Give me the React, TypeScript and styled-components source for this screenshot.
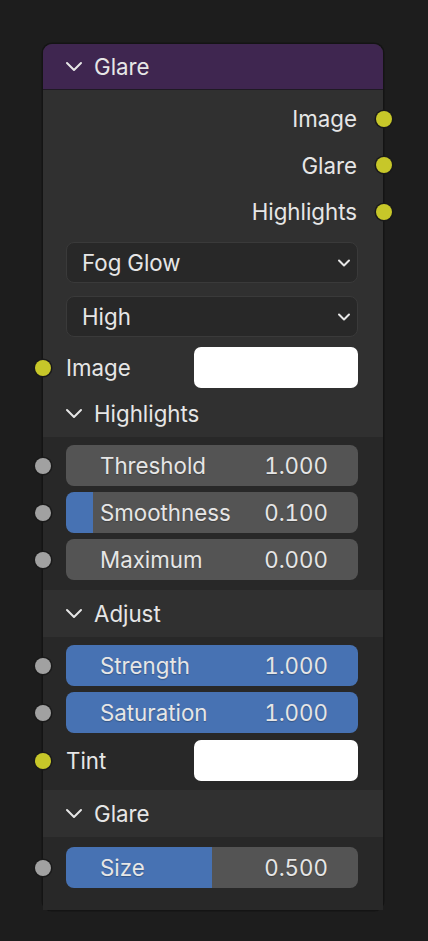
import React, { FC } from 'react';
import styled, { createGlobalStyle } from 'styled-components';

const GlobalStyle = createGlobalStyle`
    html, body {
        margin: 0;
        padding: 0;
        background: #1d1d1d;
    }
    body {
        font-family: Inter, 'Noto Sans', 'DejaVu Sans', sans-serif;
        font-size: 22.3px;
        font-variant-numeric: tabular-nums;
        color: #e6e6e6;
        -webkit-font-smoothing: antialiased;
    }
`;

const Canvas = styled.div`
    width: 428px;
    height: 941px;
    padding: 44px 0 0 43px;
    box-sizing: border-box;
`;

const Node = styled.div`
    position: relative;
    width: 340px;
    border-radius: 9px;
    background: #303030;
    box-shadow: 0 0 0 1.5px #141414;
`;

const Header = styled.div`
    height: 45px;
    display: flex;
    align-items: center;
    gap: 11px;
    padding-left: 22px;
    background: #3f2650;
    border-radius: 9px 9px 0 0;
    border-bottom: 1px solid #1f1a24;
`;

const Chevron = styled.svg`
    width: 18px;
    height: 11px;
    fill: none;
    stroke: #e6e6e6;
    stroke-width: 2px;
    stroke-linecap: round;
    stroke-linejoin: round;
    flex: none;
`;

const Section = styled.div<{ $dark?: boolean; $pt?: number; $pb?: number }>`
    display: flex;
    flex-direction: column;
    padding: ${(p) => p.$pt ?? 0}px 25px ${(p) => p.$pb ?? 0}px 23px;
    background: ${(p) => (p.$dark ? '#282828' : '#303030')};
`;

const Row = styled.div<{ $h?: number; $mt?: number }>`
    position: relative;
    height: ${(p) => p.$h ?? 41}px;
    margin-top: ${(p) => p.$mt ?? 0}px;
    display: flex;
    align-items: center;
`;

const OutputRow = styled(Row)`
    justify-content: flex-end;
    padding-right: 1px;
`;

const Socket = styled.span<{ $color: string; $side: 'left' | 'right' }>`
    position: absolute;
    top: 50%;
    ${(p) => (p.$side === 'left' ? 'left: -31px;' : 'right: -34px;')}
    width: 16px;
    height: 16px;
    margin-top: -8px;
    border-radius: 50%;
    background: ${(p) => p.$color};
    box-shadow: 0 0 0 1.5px #1a1a1a;
`;

const Dropdown = styled.div<{ $mt: number }>`
    height: 41px;
    margin-top: ${(p) => p.$mt}px;
    box-sizing: border-box;
    display: flex;
    align-items: center;
    justify-content: space-between;
    padding: 0 5px 0 15px;
    background: #282828;
    border: 1px solid #3a3a3a;
    border-radius: 8px;
`;

const DropChevron = styled(Chevron)`
    width: 16px;
    height: 10px;
`;

const InputLabel = styled.span`
    flex: 1;
`;

const Swatch = styled.div`
    width: 164px;
    height: 41px;
    border-radius: 7px;
    background: #ffffff;
`;

const PanelHeader = styled.div`
    height: 47px;
    display: flex;
    align-items: center;
    gap: 11px;
    padding-left: 22px;
    background: #303030;
`;

const Field = styled.div<{ $fill: number; $mt?: number }>`
    position: relative;
    height: 41px;
    margin-top: ${(p) => p.$mt ?? 0}px;
    border-radius: 8px;
    display: flex;
    align-items: center;
    justify-content: space-between;
    padding: 0 30px 0 34px;
    background: linear-gradient(
        to right,
        #4772b3 0%,
        #4772b3 ${(p) => p.$fill}%,
        #545454 ${(p) => p.$fill}%,
        #545454 100%
    );
`;

const FieldText = styled.span`
    position: relative;
    text-shadow: 0 1px 1px rgba(0, 0, 0, 0.25);
`;

const Down: FC = () => (
    <Chevron viewBox="0 0 18 11">
        <polyline points="2 2 9 9 16 2" />
    </Chevron>
);

const DropDown: FC<{ label: string; mt: number }> = ({ label, mt }) => (
    <Dropdown $mt={mt}>
        <span>{label}</span>
        <DropChevron viewBox="0 0 16 10">
            <polyline points="3 2.5 8 7.5 13 2.5" />
        </DropChevron>
    </Dropdown>
);

const Slider: FC<{ label: string; value: string; fill: number; mt?: number }> = ({ label, value, fill, mt }) => (
    <Field $fill={fill} $mt={mt}>
        <Socket $color="#a1a1a1" $side="left" />
        <FieldText>{label}</FieldText>
        <FieldText>{value}</FieldText>
    </Field>
);

const App: FC = () => (
    <>
        <GlobalStyle />
        <Canvas>
            <Node>
                <Header>
                    <Down />
                    <span>Glare</span>
                </Header>

                <Section $pt={5} $pb={2}>
                    <OutputRow $h={47}>
                        Image
                        <Socket $color="#c7c729" $side="right" />
                    </OutputRow>
                    <OutputRow $h={46}>
                        Glare
                        <Socket $color="#c7c729" $side="right" />
                    </OutputRow>
                    <OutputRow $h={47}>
                        Highlights
                        <Socket $color="#c7c729" $side="right" />
                    </OutputRow>
                    <DropDown label="Fog Glow" mt={7} />
                    <DropDown label="High" mt={13} />
                    <Row $mt={10}>
                        <Socket $color="#c7c729" $side="left" />
                        <InputLabel>Image</InputLabel>
                        <Swatch />
                    </Row>
                </Section>

                <PanelHeader>
                    <Down />
                    <span>Highlights</span>
                </PanelHeader>
                <Section $dark $pt={8} $pb={10}>
                    <Slider label="Threshold" value="1.000" fill={0} />
                    <Slider label="Smoothness" value="0.100" fill={9.3} mt={6} />
                    <Slider label="Maximum" value="0.000" fill={0} mt={6} />
                </Section>

                <PanelHeader>
                    <Down />
                    <span>Adjust</span>
                </PanelHeader>
                <Section $dark $pt={8} $pb={9}>
                    <Slider label="Strength" value="1.000" fill={100} />
                    <Slider label="Saturation" value="1.000" fill={100} mt={6} />
                    <Row $mt={7}>
                        <Socket $color="#c7c729" $side="left" />
                        <InputLabel>Tint</InputLabel>
                        <Swatch />
                    </Row>
                </Section>

                <PanelHeader>
                    <Down />
                    <span>Glare</span>
                </PanelHeader>
                <Section $dark $pt={10} $pb={22}>
                    <Slider label="Size" value="0.500" fill={50} />
                </Section>
            </Node>
        </Canvas>
    </>
);

export default App;
